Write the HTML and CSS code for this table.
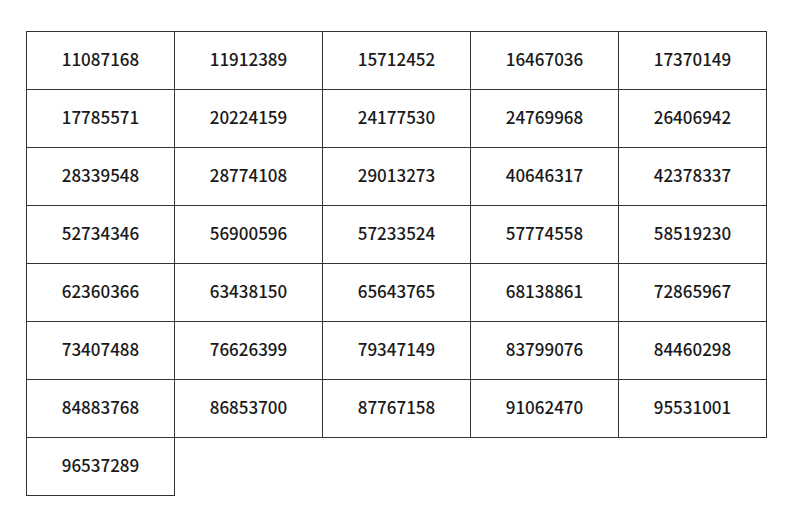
FILE: index.html
```html
<!DOCTYPE html>
<html>
<head>
<meta charset="utf-8">
<link rel="stylesheet" href="styles.css">
</head>
<body>
<div class="grid">
<div class="cell">11087168</div><div class="cell">11912389</div><div class="cell">15712452</div><div class="cell">16467036</div><div class="cell">17370149</div>
<div class="cell">17785571</div><div class="cell">20224159</div><div class="cell">24177530</div><div class="cell">24769968</div><div class="cell">26406942</div>
<div class="cell">28339548</div><div class="cell">28774108</div><div class="cell">29013273</div><div class="cell">40646317</div><div class="cell">42378337</div>
<div class="cell">52734346</div><div class="cell">56900596</div><div class="cell">57233524</div><div class="cell">57774558</div><div class="cell">58519230</div>
<div class="cell">62360366</div><div class="cell">63438150</div><div class="cell">65643765</div><div class="cell">68138861</div><div class="cell">72865967</div>
<div class="cell">73407488</div><div class="cell">76626399</div><div class="cell">79347149</div><div class="cell">83799076</div><div class="cell">84460298</div>
<div class="cell">84883768</div><div class="cell">86853700</div><div class="cell">87767158</div><div class="cell">91062470</div><div class="cell">95531001</div>
<div class="cell">96537289</div>
</div>
</body>
</html>
```
FILE: styles.css
```css
html, body {
  margin: 0;
  background: #ffffff;
}
body {
  padding: 31px 26px;
  font-family: "Noto Sans CJK JP", "Noto Sans", sans-serif;
  font-size: 17px;
  font-weight: 500;
  color: #1a1a1a;
}
.grid {
  display: grid;
  grid-template-columns: repeat(5, 148px);
  grid-auto-rows: 58px;
}
.cell {
  border: 1px solid #333333;
  margin-right: -1px;
  margin-bottom: -1px;
  padding-bottom: 4px;
  display: flex;
  align-items: center;
  justify-content: center;
}
```
